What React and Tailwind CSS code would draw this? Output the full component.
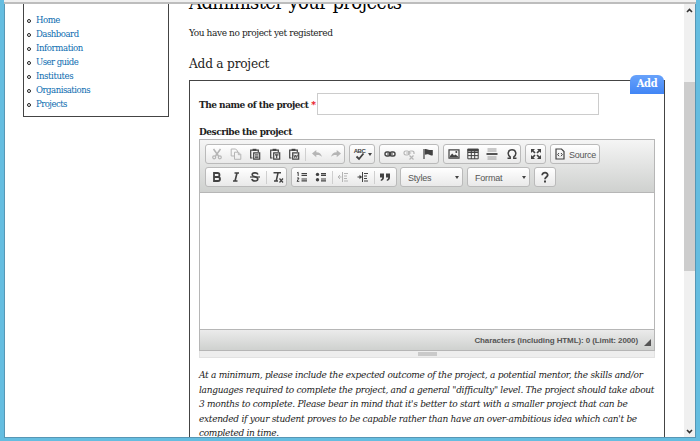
const serif = 'font-["DejaVu_Serif_Condensed","DejaVu_Serif",serif] [font-stretch:condensed]';
const links = [
  ["Home", "tracking-[-0.45px]"],
  ["Dashboard", "tracking-[-0.5px]"],
  ["Information", "tracking-[-0.4px]"],
  ["User guide", "tracking-[-0.55px]"],
  ["Institutes", "tracking-[-0.4px]"],
  ["Organisations", "tracking-[-0.5px]"],
  ["Projects", "tracking-[-0.55px]"],
];

function Icon({ children, dim, className = "w-[19.4px]" }) {
  return (
    <span className={`flex h-full shrink-0 items-center justify-center ${className} ${dim ? "text-[#b5b5b5]" : "text-[#424242]"}`}>
      <svg width="12" height="12" viewBox="0 0 12 12" fill="none" stroke="currentColor" strokeWidth="1.2">
        {children}
      </svg>
    </span>
  );
}

function Group({ className, children }) {
  return (
    <div className={`flex h-[20px] shrink-0 items-center rounded-[3px] border border-[#bababa] bg-linear-to-b from-white to-[#e9e9e9] ${className}`}>
      {children}
    </div>
  );
}

const Sep = () => <span className="mx-[1px] h-[13px] w-px shrink-0 bg-[#cfcfcf]" />;

const Caret = () => <span className="h-0 w-0 border-x-[2.5px] border-t-[3px] border-x-transparent border-t-[#424242]" />;

function Clipboard({ children }) {
  return (
    <>
      <path d="M3.5 10H1.7V2.2H9.3V4" />
      <path d="M3.6 .8h3.8v2H3.6z" fill="currentColor" stroke="none" />
      <path d="M4.7 4.8h6v6.4h-6z" />
      {children}
    </>
  );
}

function Toolbar() {
  return (
    <div className="flex h-[53px] flex-col gap-[3px] border-b border-[#b6b6b6] bg-linear-to-b from-[#f5f5f5] to-[#cfd1cf] pt-[4px] pl-[5px]">
      <div className="flex">
        <Group className="mr-[4px] w-[140px] pl-[1px]">
          <Icon dim><path d="M2.5 1l5 7M9.5 1l-5 7" strokeWidth="1.5" /><circle cx="3.2" cy="9.3" r="1.5" /><circle cx="8.8" cy="9.3" r="1.5" /></Icon>
          <Icon dim><path d="M4 8H1.2V1h4.5l1.8 2v1M4.5 4.2h4l2.3 2.3v4.8H4.5zM8.3 4.4v2.3h2.3" strokeWidth="1" /></Icon>
          <Icon><Clipboard><path d="M6 6.8h3.5M6 8.2h3.5M6 9.6h3.5" strokeWidth=".9" /></Clipboard></Icon>
          <Icon><Clipboard><path d="M6 6.8h3.5M7.7 6.8v3.4" /></Clipboard></Icon>
          <Icon><Clipboard><path d="M5.8 6.6l.9 3 1-2.5 1 2.5.9-3" strokeWidth=".9" /></Clipboard></Icon>
          <Sep />
          <Icon dim><path d="M1 5.5L5.3 2v2.2c3.3 0 5 1.6 5.7 4.8-1.5-1.7-3-2.2-5.7-2v2.2z" fill="currentColor" stroke="none" /></Icon>
          <Icon dim><path d="M11 5.5L6.7 2v2.2C3.4 4.2 1.7 5.8 1 9c1.5-1.7 3-2.2 5.7-2v2.2z" fill="currentColor" stroke="none" /></Icon>
        </Group>
        <Group className="mr-[4px] w-[26px] justify-center gap-[1px]">
          <span className="relative flex h-full w-[14px] justify-center text-[#424242]">
            <span className='pt-[3px] font-["Liberation_Sans",sans-serif] text-[6px] leading-[7px] font-bold tracking-[-0.5px]'>ABC</span>
            <svg className="absolute top-[7px] left-[2px]" width="10" height="9" viewBox="0 0 10 9" fill="none" stroke="currentColor" strokeWidth="1.8"><path d="M1.5 4.5L4 7l4.5-5.5" /></svg>
          </span>
          <Caret />
        </Group>
        <Group className="mr-[4px] w-[60px]">
          <Icon><rect x="1" y="4" width="5" height="4" rx="1.8" strokeWidth="1.4" /><rect x="6" y="4" width="5" height="4" rx="1.8" strokeWidth="1.4" /><path d="M3.2 6h5.6" strokeWidth="1.2" /></Icon>
          <Icon dim><rect x="1" y="3" width="5" height="4" rx="1.8" /><path d="M6 7V4.800A1.800 1.800 0 0 1 7.800 3H9.200A1.800 1.800 0 0 1 11 4.800V6M3.200 5h5" /><path d="M6.500 7.500l4 4M10.500 7.500l-4 4" /></Icon>
          <Icon><path d="M2 1v10" strokeWidth="1.2" /><path d="M2.8 1.2c2-.8 3 .9 5 .7h3v5.3c-2 .7-3-.2-4-.6-1.600-.5-2.500-.2-4 .2z" fill="currentColor" stroke="none" /></Icon>
        </Group>
        <Group className="mr-[4px] w-[78px]">
          <Icon><path d="M1 1.800h10v8.400H1z" /><path d="M2 9.500V8l2.200-2.500L6 7.500l1.500-1L10 8.500v1z" fill="currentColor" stroke="none" /><circle cx="8.300" cy="4" r="1" fill="currentColor" stroke="none" /></Icon>
          <Icon><path d="M.8 1.200h10.400v9.600H.8zM.8 4.500h10.400M.8 7.600h10.400M4.300 3v8M7.700 3v8" strokeWidth="1" /><path d="M.5.800h11v2.700H.5z" fill="currentColor" stroke="none" /></Icon>
          <Icon><path d="M1.500 1h9M1.500 3h9M1.500 9h9M1.500 11h9" stroke="#999" strokeWidth="1" /><path d="M.5 6h11" strokeWidth="1.800" /></Icon>
          <Icon><path d="M1.500 10.300h2.700V8.800C1 6.800 1.700 1.800 6 1.800s5 5 1.800 7v1.500h2.700" strokeWidth="1.500" /></Icon>
        </Group>
        <Group className="mr-[4px] w-[21px] justify-center">
          <Icon><path d="M2 2l3 3M10 2L7 5M2 10l3-3M10 10L7 7" strokeWidth="1.700" /><path d="M1 1h4L1 5zM11 1H7l4 4zM1 11h4L1 7zM11 11H7l4-4z" fill="currentColor" stroke="none" /></Icon>
        </Group>
        <Group className="w-[50px]">
          <Icon className="w-[18px]"><path d="M2 1h5.500L10 3.500V11H2z" /><path d="M5 5L3.700 6.600 5 8.200M7 5l1.300 1.600L7 8.200" strokeWidth="1" /></Icon>
          <span className='mt-px font-["Liberation_Sans",sans-serif] text-[9px] leading-[12px] tracking-[-0.25px] text-[#555]'>Source</span>
        </Group>
      </div>
      <div className="flex">
        <Group className="mr-[4px] w-[82px] pl-[1px]">
          <Icon><path d="M3 2h3.500a2 2 0 0 1 0 4H3zM3 6h4a2 2 0 0 1 0 4H3z" strokeWidth="1.800" /></Icon>
          <Icon><path d="M4.500 2h4.500M3 10h4.500M7 2L5 10" strokeWidth="1.600" /></Icon>
          <Icon><path d="M9 3.500C8 1 3 1.500 3.200 4c.3 2.200 5.700 1.500 5.600 4C8.600 10.700 3.500 10.600 2.800 8" strokeWidth="1.600" /><path d="M1 6h10" strokeWidth="1.200" /></Icon>
          <Sep />
          <Icon><path d="M1.500 1.800h7.500M6 2L4.200 10M2 10h4" strokeWidth="1.500" /><path d="M7.500 7.500l3.500 4M11 7.500l-3.500 4" /></Icon>
        </Group>
        <Group className="mr-[3px] w-[106px]">
          <Icon><path d="M1 2l1.200-.7V5M1 7h2L1 10.300h2.300" strokeWidth="1" /><path d="M5.500 2.500H11M5.500 4.300H11M5.500 8H11M5.500 9.800H11" /></Icon>
          <Icon><circle cx="2.500" cy="3.400" r="1.700" fill="currentColor" stroke="none" /><circle cx="2.500" cy="8.800" r="1.700" fill="currentColor" stroke="none" /><path d="M6 2.600h5M6 4.400h5M6 8h5M6 9.800h5" /></Icon>
          <Sep />
          <Icon dim><path d="M5.500 1v10M7 2.500h4M7 5h3M7 7.500h3M7 10h4M1 6h3.500M3 4L1 6l2 2" strokeWidth="1" /></Icon>
          <Icon><path d="M5.500 1v10M7 2.500h4M7 5h3M7 7.500h3M7 10h4M.5 6h4" strokeWidth="1" /><path d="M2.500 3.700v4.600L5 6z" fill="currentColor" stroke="none" /></Icon>
          <Sep />
          <Icon><path d="M1 2.500h4v4C5 8.300 4 9.500 1.800 9.900V8.500c1-.3 1.400-1 1.400-2H1zM7 2.500h4v4c0 1.800-1 3-3.200 3.400V8.500c1-.3 1.400-1 1.400-2H7z" fill="currentColor" stroke="none" /></Icon>
        </Group>
        {["Styles", "Format"].map((label) => (
          <Group key={label} className="mr-[4px] w-[63px] justify-between pr-[3px] pl-[7px]">
            <span className='mt-px font-["Liberation_Sans",sans-serif] text-[9px] leading-[12px] tracking-[-0.2px] text-[#555]'>{label}</span>
            <Caret />
          </Group>
        ))}
        <Group className="w-[22px] justify-center">
          <Icon><path d="M3.200 4.200c0-3.400 5.800-3.200 5.500 0C8.500 6 6 6 6 8.200" strokeWidth="1.800" /><path d="M5 9.400h2v2H5z" fill="currentColor" stroke="none" /></Icon>
        </Group>
      </div>
    </div>
  );
}

function Editor() {
  return (
    <div className="w-[456px]">
      <div className="flex h-[212px] flex-col border border-[#b6b6b6]">
        <Toolbar />
        <div className="flex-1 bg-white" />
        <div className="flex h-[21px] items-center justify-end gap-[6px] border-t border-[#b6b6b6] bg-linear-to-b from-[#ebebeb] to-[#cfd1cf] pr-[3px]">
          <span className='mt-[1px] font-["Liberation_Sans",sans-serif] text-[8px] font-bold whitespace-nowrap tracking-[-0.1px] text-[#555]'>Characters (including HTML): 0 (Limit: 2000)</span>
          <svg className="mt-[4px]" width="7" height="7" viewBox="0 0 7 7"><path d="M7 0v7H0z" fill="#555" /></svg>
        </div>
      </div>
      <div className="flex h-[7px] justify-center border border-t-0 border-[#e2e2e2] bg-[#eee]">
        <span className="mt-px h-[4px] w-[19px] bg-[#cacaca]" />
      </div>
    </div>
  );
}

const help = [
  ["At a minimum, please include the expected outcome of the project, a potential mentor, the skills and/or", "tracking-[-0.27px]"],
  ["languages required to complete the project, and a general \"difficulty\" level. The project should take about", "tracking-[-0.28px]"],
  ["3 months to complete. Please bear in mind that it's better to start with a smaller project that can be", "tracking-[-0.28px]"],
  ["extended if your student proves to be capable rather than have an over-ambitious idea which can't be", "tracking-[-0.27px]"],
  ["completed in time.", "tracking-[-0.3px]"],
];

export default function App() {
  return (
    <div className={`flex h-[441px] w-[700px] flex-col overflow-hidden border-r-[4px] border-b-[3px] border-l-[4px] border-[#65bde0] bg-white text-[#222] ${serif}`}>
      <div className="h-[4px] shrink-0 border-b-2 border-[#bdbdbd] bg-[#f0f0f0]" />
      <div className="flex min-h-0 flex-1 overflow-hidden border-x border-b border-[#5797b5]">
        <aside className="ml-[18px] h-[113px] w-[146px] shrink-0 border border-t-0 border-[#444] pt-[9px] pl-[3px]">
          <ul>
            {links.map(([name, tracking]) => (
              <li key={name} className="flex h-[14.100px] items-center gap-[5px]">
                <span className="mt-px h-[4px] w-[4px] rounded-full border border-[#222]" />
                <a className={`text-[9.5px] whitespace-nowrap text-[#0b6cb0] ${tracking}`}>{name}</a>
              </li>
            ))}
          </ul>
        </aside>
        <main className="ml-[20px] w-[476px] shrink-0">
          <h1 className="-mt-[15px] h-[29px] text-[20px] leading-[26px] whitespace-nowrap tracking-[-0.600px] text-black">Administer your projects</h1>
          <p className="mt-[8px] h-[14px] text-[10px] leading-[14px] tracking-[-0.390px] whitespace-nowrap">You have no project yet registered</p>
          <h2 className="mt-[13px] h-[20px] text-[13.500px] leading-[20px] tracking-[-0.200px] whitespace-nowrap">Add a project</h2>
          <section className="relative mt-[7px] h-[380px] border border-[#444] pl-[9px]">
            <span className="absolute -top-[6px] right-0 flex h-[19px] w-[34px] items-center justify-center rounded-t-[6px] bg-linear-to-b from-[#67a2fb] to-[#4185f5] text-[11px] font-bold tracking-[-0.3px] text-white">Add</span>
            <div className="mt-[12px] flex h-[22px] items-center">
              <label className="w-[118px] text-[10px] font-bold whitespace-nowrap tracking-[-0.5px]">The name of the project <span className="text-red-600">*</span></label>
              <input className="h-[22px] w-[282px] border border-[#ccc] bg-white" />
            </div>
            <div className="mt-[10px] h-[14px] text-[10px] leading-[14px] font-bold whitespace-nowrap tracking-[-0.48px]">Describe the project</div>
            <Editor />
            <div className="mt-[10px] text-[10px] leading-[14.500px] italic">
              {help.map(([line, tracking]) => (
                <p key={line} className={`whitespace-nowrap ${tracking}`}>{line}</p>
              ))}
            </div>
          </section>
        </main>
        <div className="ml-auto flex w-[11px] shrink-0 flex-col items-center bg-[#f0f0f0]">
          <svg className="mt-[4px] shrink-0" width="7" height="5" viewBox="0 0 7 5" fill="none" stroke="#333" strokeWidth="1.600"><path d="M1 4l2.500-2.500L6 4" /></svg>
          <div className="mt-[69px] h-[189px] w-full shrink-0 bg-[#cdcdcd]" />
          <svg className="mt-auto mb-[3px] shrink-0" width="7" height="5" viewBox="0 0 7 5" fill="none" stroke="#333" strokeWidth="1.600"><path d="M1 1l2.500 2.500L6 1" /></svg>
        </div>
      </div>
    </div>
  );
}
